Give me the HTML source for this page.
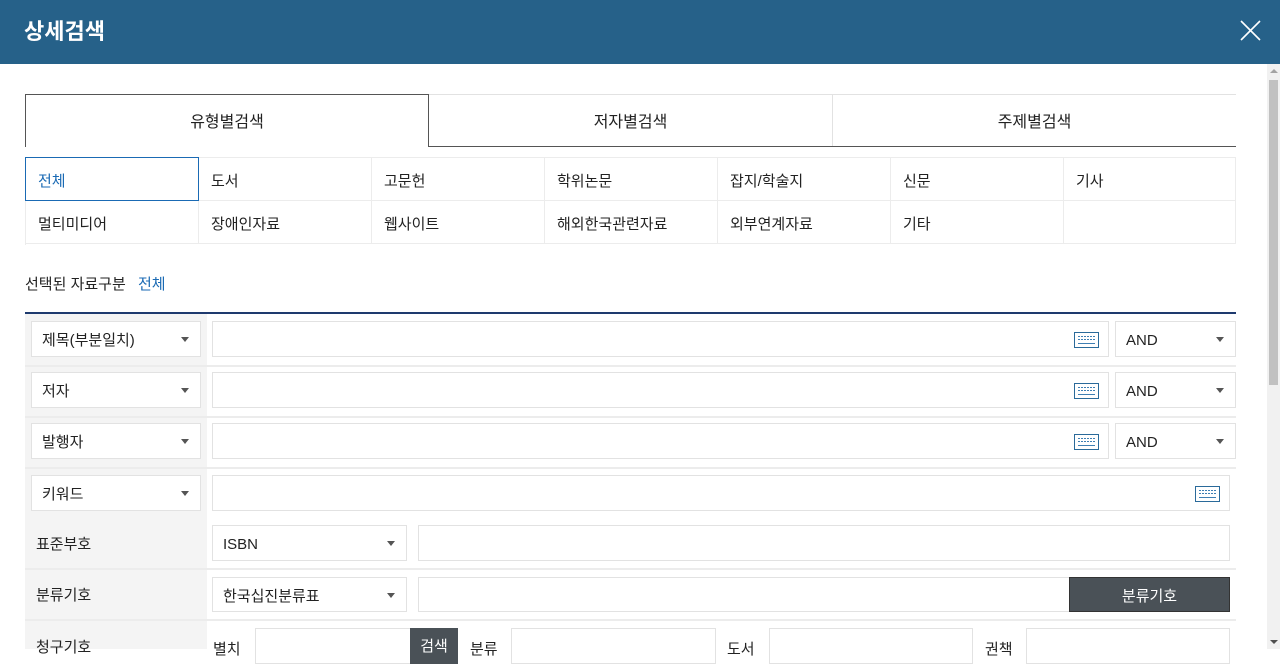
<!DOCTYPE html>
<html><head><meta charset="utf-8"><style>
*{box-sizing:border-box;margin:0;padding:0}
body{width:1280px;height:649px;overflow:hidden;background:#fff;font-family:"Liberation Sans","Noto Sans CJK KR",sans-serif;color:#222;position:relative;font-size:15px}
.a{position:absolute}
.hd{left:0;top:0;width:1280px;height:64px;background:#266189}
.hd .t{left:24px;top:14px;color:#fff;font-size:22px;font-weight:bold}
.box{border:1px solid #e2e2e2;background:#fff}
.sel::after{content:"";position:absolute;right:11px;top:50%;margin-top:-2px;border-left:4px solid transparent;border-right:4px solid transparent;border-top:5px solid #555}
.lbl{font-size:15px;line-height:37px;padding-left:10px}
.kb{position:absolute;right:9px;top:10px}
.cell{border-right:1px solid #ececec;border-bottom:1px solid #ececec;height:43px;line-height:47px;padding-left:12px;font-size:15px}
</style></head><body>
<div class="a hd"><div class="a t">상세검색</div>
<svg class="a" style="left:1240px;top:20px" width="21" height="21"><path d="M1 1L20 20M20 1L1 20" stroke="#fff" stroke-width="1.6"/></svg></div>
<div class="a" style="left:1267px;top:64px;width:13px;height:585px;background:#f1f1f1"></div>
<div class="a" style="left:1269px;top:80px;width:9px;height:305px;background:#c1c1c1"></div>
<div class="a" style="left:1270px;top:69px;border-left:4px solid transparent;border-right:4px solid transparent;border-bottom:4px solid #a3a3a3"></div>
<div class="a" style="left:1270px;top:640px;border-left:4px solid transparent;border-right:4px solid transparent;border-top:4px solid #505050"></div>
<div class="a" style="left:428px;top:94px;width:808px;height:1px;background:#e2e2e2"></div>
<div class="a" style="left:428px;top:146px;width:808px;height:1px;background:#555"></div>
<div class="a" style="left:25px;top:94px;width:404px;height:53px;border:1px solid #555;border-bottom:none;text-align:center;line-height:56px;font-size:16px">유형별검색</div>
<div class="a" style="left:429px;top:95px;width:404px;height:51px;border-right:1px solid #e2e2e2;text-align:center;line-height:55px;font-size:16px">저자별검색</div>
<div class="a" style="left:833px;top:95px;width:403px;height:51px;text-align:center;line-height:55px;font-size:16px">주제별검색</div>
<div class="a" style="left:25px;top:157px;width:1211px;height:88px;border-top:1px solid #ececec;border-left:1px solid #ececec">
<div style="display:grid;grid-template-columns:173px 173px 173px 173px 173px 173px 172px">
<div class="cell" style="color:#1a6ab4;border:1px solid #1a6ab4;height:44px;margin:-1px 0 0 -1px;width:174px">전체</div><div class="cell">도서</div><div class="cell">고문헌</div><div class="cell">학위논문</div><div class="cell">잡지/학술지</div><div class="cell">신문</div><div class="cell">기사</div>
<div class="cell">멀티미디어</div><div class="cell">장애인자료</div><div class="cell">웹사이트</div><div class="cell">해외한국관련자료</div><div class="cell">외부연계자료</div><div class="cell">기타</div><div class="cell"></div>
</div></div>
<div class="a" style="left:25px;top:273px;font-size:15px">선택된 자료구분 <span style="color:#1a6ab4;margin-left:8px">전체</span></div>
<div class="a" style="left:25px;top:312px;width:1211px;height:2px;background:#1e3a6e"></div>
<div class="a" style="left:25px;top:314px;width:182px;height:335px;background:#f4f4f4"></div>
<div class="a" style="left:25px;top:365px;width:1211px;height:2px;background:#ececec"></div>
<div class="a" style="left:25px;top:416px;width:1211px;height:2px;background:#ececec"></div>
<div class="a" style="left:25px;top:467px;width:1211px;height:2px;background:#ececec"></div>
<div class="a" style="left:25px;top:568px;width:1211px;height:2px;background:#ececec"></div>
<div class="a" style="left:25px;top:619px;width:1211px;height:2px;background:#ececec"></div>

<svg width="0" height="0" style="position:absolute"><defs><symbol id="k" viewBox="0 0 25 16"><rect x=".5" y=".5" width="24" height="15" fill="#fff" stroke="#2a6a9a"/><g fill="#3f7fb3"><rect x="4" y="4" width="2" height="1"/><rect x="7" y="4" width="2" height="1"/><rect x="10" y="4" width="2" height="1"/><rect x="13" y="4" width="2" height="1"/><rect x="16" y="4" width="2" height="1"/><rect x="19" y="4" width="2" height="1"/><rect x="4" y="7" width="2" height="1"/><rect x="7" y="7" width="2" height="1"/><rect x="10" y="7" width="2" height="1"/><rect x="13" y="7" width="2" height="1"/><rect x="16" y="7" width="2" height="1"/><rect x="19" y="7" width="2" height="1"/><rect x="4" y="11" width="17" height="1"/></g></symbol></defs></svg>

<div class="a box sel lbl" style="left:31px;top:321px;width:170px;height:36px">제목(부분일치)</div>
<div class="a box" style="left:212px;top:321px;width:897px;height:36px"><svg class="kb" width="25" height="16"><use href="#k"/></svg></div>
<div class="a box sel lbl" style="left:1115px;top:321px;width:121px;height:36px">AND</div>

<div class="a box sel lbl" style="left:31px;top:372px;width:170px;height:36px">저자</div>
<div class="a box" style="left:212px;top:372px;width:897px;height:36px"><svg class="kb" width="25" height="16"><use href="#k"/></svg></div>
<div class="a box sel lbl" style="left:1115px;top:372px;width:121px;height:36px">AND</div>

<div class="a box sel lbl" style="left:31px;top:423px;width:170px;height:36px">발행자</div>
<div class="a box" style="left:212px;top:423px;width:897px;height:36px"><svg class="kb" width="25" height="16"><use href="#k"/></svg></div>
<div class="a box sel lbl" style="left:1115px;top:423px;width:121px;height:36px">AND</div>

<div class="a box sel lbl" style="left:31px;top:475px;width:170px;height:36px">키워드</div>
<div class="a box" style="left:212px;top:475px;width:1018px;height:36px"><svg class="kb" width="25" height="16"><use href="#k"/></svg></div>

<div class="a lbl" style="left:26px;top:526px">표준부호</div>
<div class="a box sel lbl" style="left:212px;top:525px;width:195px;height:36px">ISBN</div>
<div class="a box" style="left:418px;top:525px;width:812px;height:36px"></div>

<div class="a lbl" style="left:26px;top:577px">분류기호</div>
<div class="a box sel lbl" style="left:212px;top:577px;width:195px;height:35px">한국십진분류표</div>
<div class="a box" style="left:418px;top:577px;width:652px;height:35px"></div>
<div class="a" style="left:1069px;top:577px;width:161px;height:35px;background:#4a5157;color:#fff;text-align:center;line-height:37px;border:1px solid #333">분류기호</div>

<div class="a lbl" style="left:26px;top:629px">청구기호</div>
<div class="a" style="left:213px;top:638px">별치</div>
<div class="a box" style="left:255px;top:628px;width:156px;height:36px"></div>
<div class="a" style="left:410px;top:628px;width:48px;height:36px;background:#4a5157;color:#fff;text-align:center;line-height:38px">검색</div>
<div class="a" style="left:470px;top:638px">분류</div>
<div class="a box" style="left:511px;top:628px;width:205px;height:36px"></div>
<div class="a" style="left:727px;top:638px">도서</div>
<div class="a box" style="left:769px;top:628px;width:204px;height:36px"></div>
<div class="a" style="left:985px;top:638px">권책</div>
<div class="a box" style="left:1026px;top:628px;width:204px;height:36px"></div>
</body></html>
